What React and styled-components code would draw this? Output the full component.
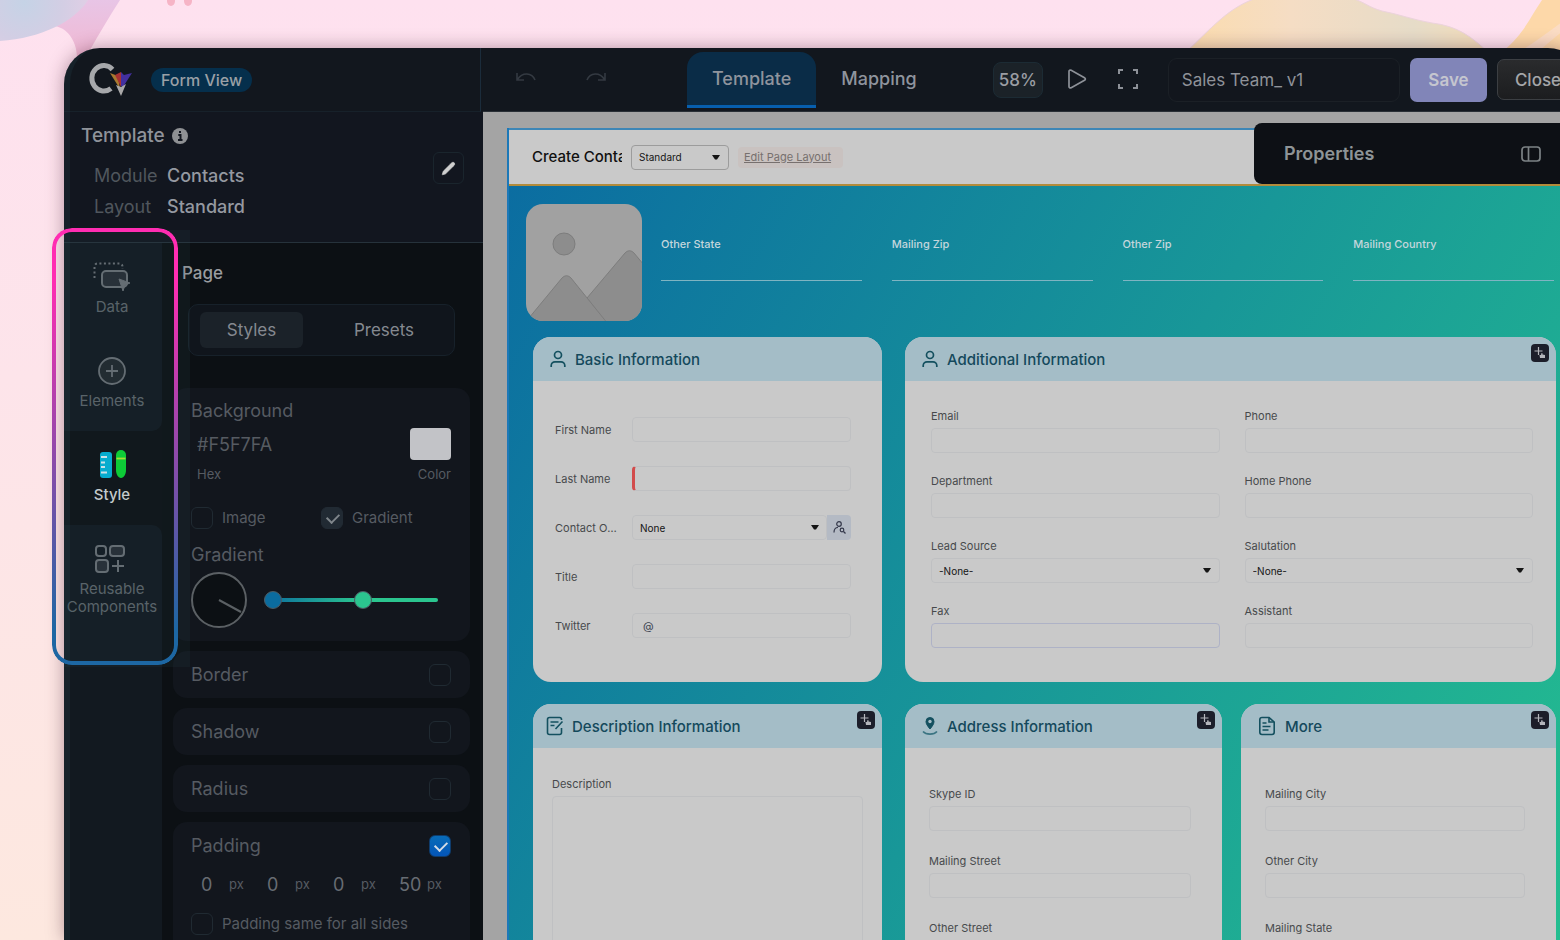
import { useState } from "react";
import styled, { createGlobalStyle, css } from "styled-components";
import { Pencil } from "lucide-react";

const additionalFields = [
    { id: "email", label: "Email" },
    { id: "phone", label: "Phone" },
    { id: "department", label: "Department" },
    { id: "home-phone", label: "Home Phone" },
    { id: "lead-source", label: "Lead Source", options: ["-None-"] },
    { id: "salutation", label: "Salutation", options: ["-None-"] },
    { id: "fax", label: "Fax", focused: true },
    { id: "assistant", label: "Assistant" },
];

const addressFields = [
    { id: "skype", label: "Skype ID" },
    { id: "mailing-street", label: "Mailing Street" },
    { id: "other-street", label: "Other Street" },
];

const moreFields = [
    { id: "mailing-city", label: "Mailing City" },
    { id: "other-city", label: "Other City" },
    { id: "mailing-state", label: "Mailing State" },
];

const heroFields = ["Other State", "Mailing Zip", "Other Zip", "Mailing Country"];

export default function App() {
    return (
        <Page>
            <GlobalStyle />
            <Backdrop />
            <Window>
                <Brand>
                    <Logo />
                    <ViewBadge>Form View</ViewBadge>
                </Brand>
                <TopBar />
                <Sidebar>
                    <TemplateInfo />
                    <SidebarBody>
                        <NavRail />
                        <StylePanel />
                    </SidebarBody>
                </Sidebar>
                <Canvas>
                    <FormPreview />
                    <Properties>
                        <h2>Properties</h2>
                        <button aria-label="Toggle properties">
                            <svg width="22" height="18" viewBox="0 0 22 18" fill="none" stroke="#7c8285" strokeWidth="1.7">
                                <rect x="2" y="2" width="18" height="14" rx="3" />
                                <path d="M8.5 2v14" />
                            </svg>
                        </button>
                    </Properties>
                </Canvas>
                <Edge />
                <Highlight />
            </Window>
        </Page>
    );
}

function Backdrop() {
    return (
        <>
            <LeftShapes width="220" height="120" viewBox="0 0 220 120">
                <defs>
                    <radialGradient id="orb" cx="24" cy="2" r="78" gradientUnits="userSpaceOnUse">
                        <stop offset="0" stopColor="#c5d3e6" />
                        <stop offset="0.5" stopColor="#d3cee4" />
                        <stop offset="1" stopColor="#e6cfe6" />
                    </radialGradient>
                    <linearGradient id="petal" x1="0" y1="0" x2="0" y2="1">
                        <stop offset="0" stopColor="#e8c5e6" />
                        <stop offset="1" stopColor="#f1b8d2" />
                    </linearGradient>
                </defs>
                <path d="M55 26L86 0h34C109 17 99 34 90 50L77 58C77 44 70 29 55 26z" fill="url(#petal)" />
                <path d="M0 0h88C75 21 42 38 0 41z" fill="url(#orb)" />
                <ellipse cx="171" cy="1" rx="4" ry="5" fill="#f6b4c6" />
                <ellipse cx="188" cy="1" rx="4" ry="5" fill="#f6b4c6" />
            </LeftShapes>
            <RightShapes width="410" height="60" viewBox="0 0 410 60">
                <defs>
                    <linearGradient id="wave" x1="0" y1="0" x2="1" y2="0">
                        <stop offset="0" stopColor="#fbdcae" />
                        <stop offset="0.35" stopColor="#f5ddc4" />
                        <stop offset="0.6" stopColor="#ecdcc6" />
                        <stop offset="0.75" stopColor="#e6dcc8" />
                        <stop offset="1" stopColor="#f3dcb8" />
                    </linearGradient>
                </defs>
                <path
                    d="M4 54C28 32 46 9 74 -1h100c12 4 14 8 28 12 16 3 32 9 50 12 26 3 40 14 58 31z"
                    fill="url(#wave)"
                    stroke="#ecd3dc"
                />
                <path d="M324 50C344 34 352 14 362 0h48v50z" fill="#fdd8a9" />
                <path d="M342 50C362 38 382 20 410 4v10C390 24 376 36 360 50z" fill="#fbdcc4" />
            </RightShapes>
        </>
    );
}

function Logo() {
    return (
        <svg width="46" height="36" viewBox="0 0 46 36" role="img" aria-label="Canvas">
            <path d="M25.500 7.500A12 12.700 0 1 0 24 26.500" fill="none" stroke="#a6a8ab" strokeWidth="5" />
            <path d="M23 11l8 3 2 13z" fill="#a87a30" />
            <path d="M28 13l6-3v15z" fill="#a83232" />
            <path d="M34 10l3 3 8-2-9 14-2-1z" fill="#43309f" />
            <path d="M29 23l5 2 5-3-5 12z" fill="#aaa9a9" />
        </svg>
    );
}

function TopBar() {
    return (
        <Toolbar>
            <History>
                <IconButton aria-label="Undo">
                    <svg width="22" height="14" viewBox="0 0 22 14" fill="none" stroke="#343a42" strokeWidth="1.600">
                        <path d="M2 2v7h7M2.500 8.500C7 1 17 1 20 9" />
                    </svg>
                </IconButton>
                <IconButton aria-label="Redo">
                    <svg width="22" height="14" viewBox="0 0 22 14" fill="none" stroke="#343a42" strokeWidth="1.600">
                        <path d="M20 2v7h-7M19.500 8.500C15 1 5 1 2 9" />
                    </svg>
                </IconButton>
            </History>
            <Tab $active>Template</Tab>
            <Tab>Mapping</Tab>
            <Zoom>58%</Zoom>
            <IconButton aria-label="Preview">
                <svg width="22" height="24" viewBox="0 0 22 24" fill="none" stroke="#8d9198" strokeWidth="1.700" strokeLinejoin="round">
                    <path d="M3 3.500v15c0 1.300 1 1.800 2.200 1.200l13.300-7.400c1.200-.7 1.200-1.900 0-2.600L5.200 2.300C4 1.700 3 2.200 3 3.500z" />
                </svg>
            </IconButton>
            <IconButton aria-label="Full screen">
                <svg width="22" height="24" viewBox="0 0 22 24" fill="none" stroke="#8d9198" strokeWidth="2">
                    <path d="M2 6V2h4M16 2h4v4M20 16v4h-4M6 20H2v-4" />
                </svg>
            </IconButton>
            <NameInput aria-label="Template name" defaultValue="Sales Team_ v1" />
            <Save>Save</Save>
            <Close>Close</Close>
        </Toolbar>
    );
}

function TemplateInfo() {
    return (
        <Info>
            <InfoTitle>
                Template
                <svg width="16" height="16" viewBox="0 0 16 16">
                    <circle cx="8" cy="8" r="8" fill="#8f9194" />
                    <path d="M6.300 7H8.500v5M6 12h4.500M7 4h2" stroke="#12161f" strokeWidth="2" fill="none" />
                </svg>
            </InfoTitle>
            <dl>
                <dt>Module</dt>
                <dd>Contacts</dd>
                <dt>Layout</dt>
                <dd>Standard</dd>
            </dl>
            <EditButton aria-label="Edit template">
                <Pencil size={15} fill="#cfcfcf" stroke="#cfcfcf" strokeWidth={1} />
            </EditButton>
        </Info>
    );
}

function NavRail() {
    return (
        <Rail>
            <NavItem>
                <svg width="38" height="32" viewBox="0 0 38 32" fill="none" stroke="#6c7177">
                    <path d="M1.500 17V5.500a3 3 0 0 1 3-3h22a3 3 0 0 1 3 3V8" strokeWidth="2" strokeDasharray="2 2.500" />
                    <rect x="9" y="10" width="25" height="16" rx="4" fill="#272d35" strokeWidth="2" />
                    <path d="M26 18l11 4-5 2-2 6z" fill="#6c7177" strokeLinejoin="round" />
                </svg>
                Data
            </NavItem>
            <NavItem $last>
                <svg width="32" height="32" viewBox="0 0 32 32" fill="none" stroke="#6c7177" strokeWidth="1.800">
                    <circle cx="16" cy="16" r="13" fill="#20272d" />
                    <path d="M16 10v12M10 16h12" />
                </svg>
                Elements
            </NavItem>
            <NavItem $active>
                <svg width="32" height="32" viewBox="1 0 32 32">
                    <rect x="5" y="3" width="12" height="26" rx="3" fill="#00b9de" />
                    <path d="M6 8h6M6 13.500h4M6 18h4M6 23.500h6" stroke="#dff6fb" strokeWidth="1.800" />
                    <path d="M21 6a4 4 0 0 1 10 0v15c0 4-2 8-5 8s-5-4-5-8z" fill="#08dc33" />
                    <path d="M21.500 9.500h9" stroke="#b6f032" strokeWidth="1.800" />
                </svg>
                Style
            </NavItem>
            <NavItem $first>
                <svg width="34" height="32" viewBox="2 0 34 32" fill="none" stroke="#6c7177" strokeWidth="2">
                    <rect x="3" y="3" width="10" height="10" rx="3" />
                    <rect x="17" y="3" width="14" height="10" rx="3" fill="#272d35" />
                    <rect x="3" y="17" width="12" height="12" rx="3" fill="#272d35" />
                    <path d="M25 17v12M19 23h12" />
                </svg>
                Reusable Components
            </NavItem>
        </Rail>
    );
}

function StylePanel() {
    const [start, setStart] = useState(0);
    const [end, setEnd] = useState(58);
    return (
        <Panel>
            <h2>Page</h2>
            <Segmented>
                <Segment $active>Styles</Segment>
                <Segment>Presets</Segment>
            </Segmented>
            <BackgroundCard>
                <PanelTitle>Background</PanelTitle>
                <ColorRow>
                    <HexField>
                        <input id="hex" defaultValue="#F5F7FA" />
                        <label htmlFor="hex">Hex</label>
                    </HexField>
                    <ColorField>
                        <input id="color" type="color" defaultValue="#c2c3c7" />
                        <label htmlFor="color">Color</label>
                    </ColorField>
                </ColorRow>
                <Toggles>
                    <CheckLabel>
                        <Checkbox type="checkbox" />
                        Image
                    </CheckLabel>
                    <CheckLabel>
                        <Checkbox type="checkbox" defaultChecked $muted />
                        Gradient
                    </CheckLabel>
                </Toggles>
                <PanelTitle>Gradient</PanelTitle>
                <GradientRow>
                    <svg width="56" height="56" viewBox="0 0 56 56" fill="none" stroke="#5b6064" strokeWidth="2">
                        <circle cx="28" cy="28" r="27" fill="#0c1014" />
                        <path d="M28 28l22 12" />
                    </svg>
                    <Stops>
                        <StopRange
                            type="range"
                            aria-label="Gradient start"
                            $track
                            $color="#0b6c9f"
                            value={start}
                            onChange={(e) => setStart(e.target.value)}
                        />
                        <StopRange
                            type="range"
                            aria-label="Gradient end"
                            $color="#2bc58f"
                            value={end}
                            onChange={(e) => setEnd(e.target.value)}
                        />
                    </Stops>
                </GradientRow>
            </BackgroundCard>
            {["Border", "Shadow", "Radius"].map((name) => (
                <OptionCard key={name}>
                    <OptionRow>
                        {name}
                        <Checkbox type="checkbox" />
                    </OptionRow>
                </OptionCard>
            ))}
            <PaddingCard>
                <OptionRow>
                    Padding
                    <Checkbox type="checkbox" defaultChecked />
                </OptionRow>
                <PaddingValues>
                    {[0, 0, 0, 50].map((value, i) => (
                        <label key={i}>
                            <input aria-label={`Padding ${i + 1}`} defaultValue={value} />
                            px
                        </label>
                    ))}
                </PaddingValues>
                <CheckLabel>
                    <Checkbox type="checkbox" />
                    Padding same for all sides
                </CheckLabel>
            </PaddingCard>
        </Panel>
    );
}

function FormPreview() {
    return (
        <Sheet>
            <SheetHeader>
                <h1>Create Contact</h1>
                <LayoutSelect>
                    <select aria-label="Layout">
                        <option>Standard</option>
                    </select>
                    <Caret />
                </LayoutSelect>
                <a href="#layout">Edit Page Layout</a>
            </SheetHeader>
            <Form>
                <Hero>
                    <Photo />
                    <HeroFields>
                        {heroFields.map((name) => (
                            <label key={name}>
                                {name}
                                <input />
                            </label>
                        ))}
                    </HeroFields>
                </Hero>
                <Sections>
                    <Section>
                        <SectionHeader>
                            <PersonIcon />
                            Basic Information
                        </SectionHeader>
                        <BasicBody>
                            <InlineField>
                                <label htmlFor="first">First Name</label>
                                <TextInput id="first" />
                            </InlineField>
                            <InlineField>
                                <label htmlFor="last">Last Name</label>
                                <TextInput id="last" $required />
                            </InlineField>
                            <InlineField>
                                <label htmlFor="owner">Contact Owner</label>
                                <OwnerPicker>
                                    <SelectBox>
                                        <select id="owner">
                                            <option>None</option>
                                        </select>
                                        <Caret />
                                    </SelectBox>
                                    <button aria-label="Find user">
                                        <svg width="13" height="13" viewBox="0 0 13 13" fill="none" stroke="#34384a" strokeWidth="1.200">
                                            <circle cx="6" cy="3" r="2.300" />
                                            <path d="M1 11.500c0-3 1.500-5 4-5" />
                                            <circle cx="9" cy="9" r="1.800" />
                                            <path d="M10.500 10.500l2 2" />
                                        </svg>
                                    </button>
                                </OwnerPicker>
                            </InlineField>
                            <InlineField>
                                <label htmlFor="title">Title</label>
                                <TextInput id="title" />
                            </InlineField>
                            <InlineField>
                                <label htmlFor="twitter">Twitter</label>
                                <TextInput id="twitter" defaultValue="@" />
                            </InlineField>
                        </BasicBody>
                    </Section>
                    <Section>
                        <SectionHeader>
                            <PersonIcon />
                            Additional Information
                        </SectionHeader>
                        <MoveBadge />
                        <AdditionalBody>
                            <Fields fields={additionalFields} />
                        </AdditionalBody>
                    </Section>
                    <Section>
                        <SectionHeader $tight>
                            <svg width="18" height="20" viewBox="0 0 18 20" fill="none" stroke="#14505f" strokeWidth="1.600">
                                <path d="M15.500 4V3.500c0-1.500-.7-2-2-2h-10c-1.300 0-2 .7-2 2v13c0 1.300.7 2 2 2h10c1.300 0 2-.7 2-2V12" />
                                <path d="M4.500 6h8M4.500 9.500h4M16.500 5.500L9.500 13" />
                            </svg>
                            Description Information
                        </SectionHeader>
                        <MoveBadge />
                        <DescriptionBody>
                            <StackField>
                                <label htmlFor="description">Description</label>
                                <TextArea id="description" />
                            </StackField>
                        </DescriptionBody>
                    </Section>
                    <SplitSections>
                        <Section>
                            <SectionHeader>
                                <svg width="16" height="20" viewBox="0 0 16 20" fill="none">
                                    <path
                                        d="M8 13C5.500 10 4 7.800 4 5.500a4 4 0 0 1 8 0C12 7.800 10.500 10 8 13z"
                                        fill="#14505f"
                                        stroke="#14505f"
                                    />
                                    <circle cx="8" cy="5.500" r="1.700" fill="#a4bdc7" />
                                    <path d="M1 15.500c3 3.500 11 3.500 14 0" stroke="#3b7482" strokeWidth="1.600" />
                                </svg>
                                Address Information
                            </SectionHeader>
                            <MoveBadge />
                            <AddressBody>
                                <Fields fields={addressFields} />
                            </AddressBody>
                        </Section>
                        <Section>
                            <SectionHeader>
                                <svg width="18" height="20" viewBox="0 0 18 20" fill="none" stroke="#14505f" strokeWidth="1.600">
                                    <path d="M11 1.500H4c-1.500 0-2.200.7-2.200 2.200v12.600c0 1.500.7 2.200 2.200 2.200h10c1.500 0 2.200-.7 2.200-2.200V6z" />
                                    <path d="M11 1.500V6h5M4.500 7h4M4.500 10.500h8M4.500 14h6" />
                                </svg>
                                More
                            </SectionHeader>
                            <MoveBadge />
                            <AddressBody>
                                <Fields fields={moreFields} />
                            </AddressBody>
                        </Section>
                    </SplitSections>
                </Sections>
            </Form>
        </Sheet>
    );
}

function Fields({ fields }) {
    return fields.map(({ id, label, options, focused }) => (
        <StackField key={id}>
            <label htmlFor={id}>{label}</label>
            {options ? (
                <SelectBox>
                    <select id={id}>
                        {options.map((option) => (
                            <option key={option}>{option}</option>
                        ))}
                    </select>
                    <Caret />
                </SelectBox>
            ) : (
                <TextInput id={id} $focused={focused} />
            )}
        </StackField>
    ));
}

function Caret() {
    return (
        <svg width="8" height="5" viewBox="0 0 8 5">
            <path d="M0 0h8L5 4.500H3z" fill="#151515" />
        </svg>
    );
}

function PersonIcon() {
    return (
        <svg width="16" height="18" viewBox="0 0 16 18" fill="none" stroke="#14505f" strokeWidth="1.700">
            <circle cx="8" cy="5" r="3.500" />
            <path d="M1.200 17v-1.500a3.800 3.800 0 0 1 3.800-3.700h6a3.800 3.800 0 0 1 3.800 3.700V17" />
        </svg>
    );
}

function MoveBadge() {
    return (
        <Badge aria-label="Move section">
            <svg width="14" height="14" viewBox="0 0 14 14">
                <path d="M5.500 1v8M1.500 5h8" stroke="#b4b5bb" strokeWidth="1.200" />
                <path d="M7 12l-.5-3L8 9l.5-2 1 .2V8.500l2.500.5v3z" fill="#b4b5bb" />
            </svg>
        </Badge>
    );
}

function Photo() {
    return (
        <PhotoFrame width="116" height="117" viewBox="0 0 116 117">
            <path d="M0 0h116v117H0z" fill="#a1a1a1" />
            <g fill="#8d8d8d" stroke="#7d7d7d">
                <circle cx="38" cy="40" r="11" />
                <path d="M61 94L99 49c3-3 6-3 9 0l10 12v58H80z" />
                <path d="M-2 120L36 74c3-3 6-3 9 0l37 46z" />
            </g>
        </PhotoFrame>
    );
}

const GlobalStyle = createGlobalStyle`
    * {
        box-sizing: border-box;
    }
    body, h1, h2, dl, dd {
        margin: 0;
    }
    body, button, input, select, textarea {
        font-family: Inter, "Liberation Sans", sans-serif;
    }
    button {
        border: none;
        padding: 0;
        background: none;
        cursor: pointer;
    }
    svg {
        display: block;
        flex: none;
    }
`;

const Page = styled.main`
    position: relative;
    height: 100vh;
    padding: 48px 0 0 64px;
    overflow: hidden;
    background: linear-gradient(#fee1ef 0%, #fde4ea 40%, #fde8df 100%);
`;

const LeftShapes = styled.svg`
    position: absolute;
    top: 0;
    left: 0;
`;

const RightShapes = styled.svg`
    position: absolute;
    top: 0;
    right: -30px;
`;

const Window = styled.div`
    position: relative;
    display: grid;
    grid-template-columns: 419px minmax(0, 1fr);
    grid-template-rows: 64px minmax(0, 1fr);
    height: 100%;
    margin-right: -24px;
    border-radius: 36px 36px 0 0;
    background: #12171e;
    box-shadow: 0 0 18px rgba(70, 30, 50, 0.4);
`;

const Brand = styled.div`
    display: flex;
    align-items: center;
    gap: 18px;
    margin-right: 2px;
    padding-left: 23px;
    border-right: 1px solid #1b2c3b;
    border-bottom: 1px solid #17212a;
`;

const ViewBadge = styled.span`
    padding: 0 10px;
    border-radius: 12px;
    background: #052f4c;
    color: #9aa0a6;
    font-size: 16px;
    font-weight: 500;
    line-height: 24px;
`;

const Toolbar = styled.header`
    display: flex;
    align-items: center;
    min-width: 0;
    padding-right: 5px;
    border-bottom: 1px solid #2a3036;
`;

const History = styled.div`
    display: flex;
    gap: 48px;
    padding: 0 80px 4px 32px;
`;

const IconButton = styled.button`
    flex: none;
    & + & {
        margin-left: 29px;
    }
    ${History} & {
        margin-left: 0;
    }
`;

const Tab = styled.button`
    height: 56px;
    padding: 0 25px;
    border-radius: 16px 16px 0 0;
    border-bottom: 3px solid ${(props) => (props.$active ? "#075fae" : "transparent")};
    background: ${(props) => (props.$active ? "#0a2c47" : "none")};
    color: #8f949d;
    font-size: 18px;
    font-weight: 500;
`;

const Zoom = styled.button`
    width: 50px;
    height: 36px;
    margin: 0 23px 0 51px;
    border: 1px solid #1c2b34;
    border-radius: 8px;
    background: #1b2228;
    color: #9a9da3;
    font-size: 17px;
    font-weight: 500;
`;

const NameInput = styled.input`
    flex: 1;
    min-width: 0;
    height: 44px;
    margin-left: 29px;
    padding: 0 13px;
    border: 1px solid #1b2026;
    border-radius: 9px;
    background: #12161d;
    color: #8f9299;
    font-size: 17px;
`;

const Save = styled.button`
    width: 77px;
    height: 44px;
    margin: 0 10px;
    border-radius: 7px;
    background: #8185b8;
    color: #c5c6cf;
    font-size: 17px;
    font-weight: 600;
`;

const Close = styled.button`
    width: 82px;
    height: 41px;
    border: 1px solid #3c3f43;
    border-radius: 7px;
    background: linear-gradient(#2a2b2d, #1c1d1f);
    color: #a5a6a9;
    font-size: 17px;
    font-weight: 500;
`;

const Sidebar = styled.aside`
    display: flex;
    flex-direction: column;
    min-height: 0;
`;

const Info = styled.section`
    position: relative;
    padding: 12px 17px 23px;
    border-bottom: 1px solid #26323b;
    background: #12161f;
    dl {
        display: grid;
        grid-template-columns: 73px 1fr;
        row-gap: 7px;
        padding: 16px 0 0 13px;
        font-size: 18px;
        line-height: 24px;
    }
    dt {
        color: #50565d;
    }
    dd {
        color: #9599a1;
        font-weight: 500;
    }
`;

const InfoTitle = styled.h2`
    display: flex;
    align-items: center;
    gap: 7px;
    color: #8f939a;
    font-size: 19px;
    font-weight: 500;
    line-height: 24px;
`;

const EditButton = styled.button`
    position: absolute;
    top: 40px;
    right: 19px;
    display: grid;
    place-items: center;
    width: 31px;
    height: 32px;
    border: 1px solid #1a252d;
    border-radius: 6px;
`;

const SidebarBody = styled.div`
    display: flex;
    flex: 1;
    min-height: 0;
    background: #0c1014;
`;

const Rail = styled.nav`
    display: flex;
    flex-direction: column;
    width: 98px;
    background: #0d1115;
`;

const NavItem = styled.button`
    display: flex;
    flex-direction: column;
    align-items: center;
    gap: 5px;
    height: 94px;
    padding: 18px 2px 0 0;
    background: ${(props) => (props.$active ? "none" : "#121920")};
    color: ${(props) => (props.$active ? "#d9dcdd" : "#5f666c")};
    font-size: 15px;
    font-weight: ${(props) => (props.$active ? 500 : 400)};
    line-height: 18px;
    ${(props) =>
        props.$last &&
        css`
            border-bottom-right-radius: 10px;
        `}
    ${(props) =>
        props.$first &&
        css`
            flex: 1;
            border-top-right-radius: 10px;
        `}
`;

const Panel = styled.section`
    display: flex;
    flex: 1;
    flex-direction: column;
    gap: 10px;
    min-width: 0;
    padding: 18px 13px 0 11px;
    overflow: hidden;
    h2 {
        padding-left: 9px;
        color: #9a9da0;
        font-size: 17px;
        font-weight: 500;
        line-height: 24px;
    }
`;

const Segmented = styled.div`
    display: grid;
    flex: none;
    grid-template-columns: 103px 1fr;
    gap: 22px;
    margin: 9px 15px 22px;
    padding: 7px 11px;
    border: 1px solid #17212a;
    border-radius: 10px;
    background: #10151c;
`;

const Segment = styled.button`
    height: 36px;
    border-radius: 6px;
    background: ${(props) => (props.$active ? "#1b2229" : "none")};
    color: #858990;
    font-size: 17px;
`;

const OptionCard = styled.div`
    flex: none;
    padding: 0 19px 0 18px;
    border-radius: 14px;
    background: #12161d;
    color: #565b62;
`;

const BackgroundCard = styled(OptionCard)`
    padding-top: 11px;
    padding-bottom: 13px;
`;

const PaddingCard = styled(OptionCard)`
    padding-bottom: 24px;
`;

const PanelTitle = styled.h3`
    margin: 0;
    font-size: 18px;
    font-weight: 400;
    line-height: 24px;
`;

const ColorRow = styled.div`
    display: flex;
    justify-content: space-between;
    padding: 5px 0 25px;
    label {
        font-size: 13px;
        line-height: 16px;
    }
`;

const HexField = styled.div`
    display: flex;
    flex-direction: column;
    gap: 6px;
    padding-left: 6px;
    input {
        width: 120px;
        height: 32px;
        padding: 0;
        border: none;
        background: none;
        color: #565b62;
        font-size: 18px;
    }
`;

const ColorField = styled.div`
    display: flex;
    flex-direction: column;
    align-items: flex-end;
    gap: 6px;
    input {
        width: 41px;
        height: 32px;
        padding: 0;
        border: none;
        background: none;
    }
    input::-webkit-color-swatch-wrapper {
        padding: 0;
    }
    input::-webkit-color-swatch {
        border: none;
        border-radius: 4px;
    }
`;

const Toggles = styled.div`
    display: grid;
    grid-template-columns: 130px 1fr;
    padding-bottom: 14px;
`;

const CheckLabel = styled.label`
    display: flex;
    align-items: center;
    gap: 9px;
    font-size: 15px;
    line-height: 22px;
`;

const Checkbox = styled.input`
    appearance: none;
    flex: none;
    width: 22px;
    height: 22px;
    margin: 0;
    border: 1px solid #202a32;
    border-radius: 6px;
    &:checked {
        border-color: ${(props) => (props.$muted ? "#212a33" : "#0f3c6c")};
        background: ${(props) => (props.$muted ? "#212a33" : "linear-gradient(#086cb8, #0455b8)")};
    }
    &:checked::after {
        content: "";
        display: block;
        width: 6px;
        height: 10px;
        margin: 3px 0 0 7px;
        border: solid ${(props) => (props.$muted ? "#7f868b" : "#d5dde6")};
        border-width: 0 2px 2px 0;
        rotate: 45deg;
    }
`;

const GradientRow = styled.div`
    display: flex;
    align-items: center;
    gap: 17px;
    padding-top: 5px;
`;

const Stops = styled.div`
    display: grid;
    flex: 1;
    margin-right: 13px;
`;

const StopRange = styled.input`
    appearance: none;
    grid-area: 1 / 1;
    width: 100%;
    height: 18px;
    margin: 0;
    background: none;
    pointer-events: none;
    &::-webkit-slider-runnable-track {
        height: 4px;
        border-radius: 2px;
        background: ${(props) => (props.$track ? "linear-gradient(90deg, #0b6c9f, #2bc58f 55%)" : "none")};
    }
    &::-webkit-slider-thumb {
        appearance: none;
        width: 18px;
        height: 18px;
        margin-top: -7px;
        border: 1px solid #4c5a63;
        border-radius: 50%;
        background: ${(props) => props.$color};
        pointer-events: auto;
    }
`;

const OptionRow = styled.label`
    display: flex;
    align-items: center;
    justify-content: space-between;
    height: 47px;
    font-size: 18px;
`;

const PaddingValues = styled.div`
    display: grid;
    grid-template-columns: repeat(4, 66px);
    margin-right: -19px;
    padding: 4px 0 18px 10px;
    label {
        display: flex;
        align-items: center;
        font-size: 13px;
        line-height: 22px;
    }
    input {
        width: 28px;
        padding: 0;
        border: none;
        background: none;
        color: #676c73;
        font-size: 18px;
    }
`;

const Canvas = styled.section`
    position: relative;
    min-width: 0;
    padding: 16px 0 0 24px;
    overflow: hidden;
    background: #a4a4a4;
`;

const Properties = styled.aside`
    position: absolute;
    top: 11px;
    right: 0;
    display: flex;
    align-items: center;
    justify-content: space-between;
    width: 330px;
    height: 61px;
    padding: 0 42px 0 30px;
    border-radius: 8px;
    background: #0d1015;
    h2 {
        color: #8e9497;
        font-size: 18px;
        font-weight: 600;
    }
`;

const Sheet = styled.div`
    border-left: 2px solid #1c78b8;
`;

const SheetHeader = styled.div`
    display: flex;
    align-items: center;
    height: 58px;
    padding-left: 23px;
    border-top: 2px solid #3d86b6;
    border-bottom: 2px solid #b28b3b;
    background: #c9c9c9;
    h1 {
        width: 90px;
        overflow: hidden;
        color: #101010;
        font-size: 15px;
        font-weight: 500;
        line-height: 20px;
        white-space: nowrap;
    }
    a {
        margin-left: 9px;
        padding: 0 12px 0 6px;
        border-radius: 4px;
        background: #c9c2c0;
        color: #77706e;
        font-size: 11px;
        line-height: 21px;
    }
`;

const SelectBox = styled.div`
    position: relative;
    flex: 1;
    min-width: 0;
    select {
        display: block;
        appearance: none;
        width: 100%;
        height: 25px;
        padding: 0 7px;
        border: 1px solid #bfc0c2;
        border-radius: 4px;
        background: none;
        color: #151515;
        font-size: 10px;
    }
    svg {
        position: absolute;
        top: 10px;
        right: 9px;
        pointer-events: none;
    }
`;

const LayoutSelect = styled(SelectBox)`
    flex: none;
    width: 98px;
    margin-left: 9px;
    select {
        border-color: #9c9c9c;
    }
`;

const Form = styled.form`
    height: 820px;
    background: linear-gradient(120deg, #0b6da1, #25c18f);
`;

const Hero = styled.div`
    display: flex;
    gap: 19px;
    padding: 18px 30px 16px 17px;
`;

const PhotoFrame = styled.svg`
    border-radius: 17px;
`;

const HeroFields = styled.div`
    display: grid;
    flex: 1;
    grid-template-columns: repeat(4, minmax(0, 1fr));
    gap: 30px;
    padding-top: 33px;
    label {
        color: #c4d6dc;
        font-size: 11px;
        font-weight: 500;
        line-height: 14px;
    }
    input {
        display: block;
        width: 100%;
        height: 30px;
        padding: 0;
        border: none;
        border-bottom: 1px solid #7fb4c2;
        background: none;
        color: inherit;
    }
`;

const Sections = styled.div`
    display: grid;
    grid-template-columns: 349fr 651fr;
    gap: 22px 23px;
    padding: 0 28px 0 24px;
`;

const SplitSections = styled.div`
    display: grid;
    grid-template-columns: 317fr 315fr;
    gap: 19px;
`;

const Section = styled.section`
    position: relative;
    min-width: 0;
    border-radius: 18px;
    overflow: hidden;
    background: #c9c9c9;
`;

const SectionHeader = styled.h2`
    display: flex;
    align-items: center;
    gap: ${(props) => (props.$tight ? 8 : 9)}px;
    height: 44px;
    padding-left: ${(props) => (props.$tight ? 13 : 17)}px;
    background: #a4bdc7;
    color: #14495c;
    font-size: 15px;
    font-weight: 500;
`;

const Badge = styled.button`
    position: absolute;
    top: 7px;
    right: 7px;
    display: grid;
    place-items: center;
    width: 18px;
    height: 18px;
    border-radius: 4px;
    background: #1c1e2a;
`;

const BasicBody = styled.div`
    display: grid;
    gap: 24px;
    padding: 36px 31px 44px 22px;
`;

const InlineField = styled.div`
    display: grid;
    grid-template-columns: 65px minmax(0, 1fr);
    gap: 12px;
    align-items: center;
    label {
        overflow: hidden;
        color: #47494c;
        font-size: 11px;
        line-height: 14px;
        text-overflow: ellipsis;
        white-space: nowrap;
    }
`;

const TextInput = styled.input`
    display: block;
    width: 100%;
    height: 25px;
    padding: 0 10px;
    border: 1px solid ${(props) => (props.$focused ? "#aeb2c6" : "#bfc0c2")};
    border-radius: 4px;
    background: none;
    color: #3b4350;
    font-size: 11px;
    ${(props) =>
        props.$required &&
        css`
            border-left: 3px solid #d24b4b;
        `}
`;

const OwnerPicker = styled.div`
    display: flex;
    button {
        display: grid;
        place-items: center;
        width: 24px;
        height: 25px;
        border-radius: 0 4px 4px 0;
        background: #b4bac4;
    }
    svg {
        right: 8px;
    }
`;

const AdditionalBody = styled.div`
    display: grid;
    grid-template-columns: 1fr 1fr;
    gap: 21px 25px;
    padding: 28px 23px 33px 26px;
`;

const DescriptionBody = styled.div`
    padding: 29px 19px;
`;

const AddressBody = styled.div`
    display: grid;
    gap: 23px;
    padding: 39px 31px 39px 24px;
`;

const StackField = styled.div`
    label {
        display: block;
        margin-bottom: 5px;
        color: #47494c;
        font-size: 11px;
        line-height: 14px;
    }
`;

const TextArea = styled.textarea`
    display: block;
    width: 100%;
    height: 200px;
    border: 1px solid #bfc0c2;
    border-radius: 4px;
    background: none;
    resize: none;
`;

// lighter strip along the left side of the window
const Edge = styled.div`
    position: absolute;
    inset: 0 auto 0 0;
    width: 36px;
    border-left: 6px solid rgba(40, 75, 85, 0.2);
    border-top-left-radius: 36px;
    pointer-events: none;
`;

const Highlight = styled.div`
    position: absolute;
    top: 180px;
    left: -12px;
    width: 126px;
    height: 437px;
    pointer-events: none;
    &::before {
        content: "";
        position: absolute;
        inset: 2px -12px -2px 12px;
        background: rgba(50, 80, 90, 0.12);
    }
    &::after {
        content: "";
        position: absolute;
        inset: 0;
        padding: 4px;
        border-radius: 20px;
        background: linear-gradient(#ff2db2 12%, #1d67a3 92%);
        mask: linear-gradient(#000 0 0) content-box exclude, linear-gradient(#000 0 0);
    }
`;
